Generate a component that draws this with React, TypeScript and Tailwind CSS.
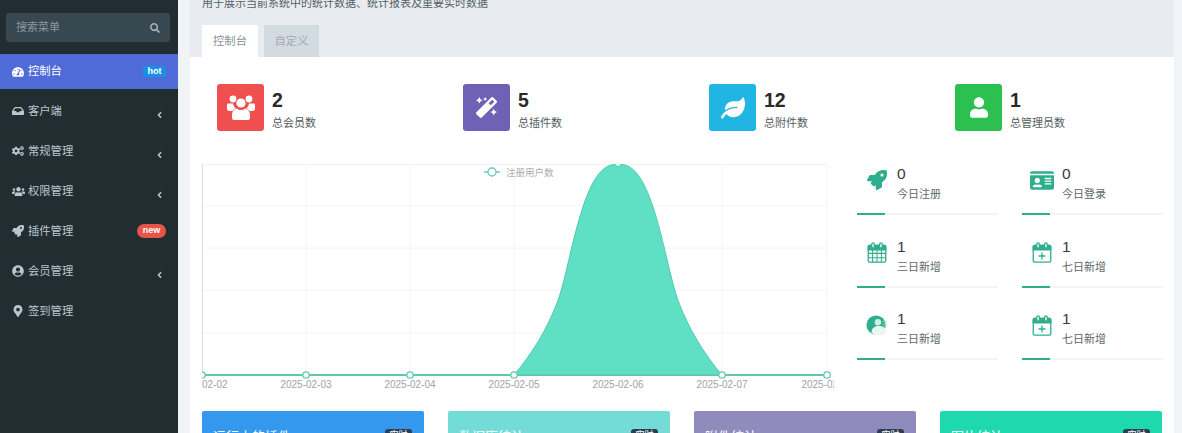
import React from "react";
import {
  FaAngleLeft,
  FaCogs,
  FaIdCard,
  FaInbox,
  FaLeaf,
  FaMagic,
  FaMapMarkerAlt,
  FaRocket,
  FaSearch,
  FaTachometerAlt,
  FaUser,
  FaUserCircle,
  FaUsers,
} from "react-icons/fa";

const fontStack = { fontFamily: '"Liberation Sans", "Noto Sans CJK SC", sans-serif' };

function GroupIcon() {
  return (
    <svg viewBox="0 0 30 30" className="h-[30px] w-[30px] fill-white">
      <circle cx="7" cy="6" r="3.4" />
      <circle cx="23" cy="6" r="3.4" />
      <circle cx="15" cy="10" r="4.6" />
      <path d="M2 10.5h5a7 7 0 0 0 2.6 5A7 7 0 0 0 6.5 18H3.5A2.5 2.5 0 0 1 1 15.5V12a1.5 1.5 0 0 1 1-1.5z" />
      <path d="M28 10.5h-5a7 7 0 0 1-2.6 5 7 7 0 0 1 3.1 2.5h3a2.500 2.500 0 0 0 2.500-2.500V12a1.500 1.500 0 0 0-1-1.500z" />
      <path d="M8 27a2 2 0 0 1-2-2v-3c0-4 3-6.500 5-6.500 1 1 2.500 1.500 4 1.500s3-.5 4-1.500c2 0 5 2.500 5 6.500v3a2 2 0 0 1-2 2z" />
    </svg>
  );
}

function CalendarIcon({ grid }: { grid?: boolean }) {
  return (
    <svg viewBox="0 0 22 24" className="h-[21px] w-[20px]" fill="none" stroke="#2fae8e" strokeWidth="1.500">
      <rect x="1" y="4" width="20" height="19" rx="1.500" />
      <path d="M1 9V5.500A1.500 1.500 0 0 1 2.500 4h17A1.500 1.500 0 0 1 21 5.500V9z" fill="#2fae8e" />
      <rect x="5" y="1" width="3" height="6" rx="1.500" fill="#fff" />
      <rect x="14" y="1" width="3" height="6" rx="1.500" fill="#fff" />
      {grid ? (
        <path d="M1 13h20M1 18h20M6 9v14M11 9v14M16 9v14" strokeWidth="1.200" />
      ) : (
        <path d="M11 12v8M7 16h8" />
      )}
    </svg>
  );
}

function PersonDiscIcon() {
  return (
    <svg viewBox="0 0 24 24" className="h-[22px] w-[22px]">
      <circle cx="11" cy="12" r="10.500" fill="#2fae8e" />
      <circle cx="13" cy="9" r="3.500" fill="#cfeee5" />
      <path d="M6 20c0-5 4-7 8-7s8 2 8 6l-3 4H9z" fill="#e9f7f3" />
      <path d="M18 8h5M18 11h5M18 14h5" stroke="#a9dccd" strokeWidth="1" />
    </svg>
  );
}

const menu = [
  { label: "控制台", icon: <FaTachometerAlt />, active: true, badge: "hot" },
  { label: "客户端", icon: <FaInbox />, arrow: true },
  { label: "常规管理", icon: <FaCogs />, arrow: true },
  { label: "权限管理", icon: <FaUsers className="h-[13px] w-[13px]" />, arrow: true },
  { label: "插件管理", icon: <FaRocket />, badge: "new" },
  { label: "会员管理", icon: <FaUserCircle />, arrow: true },
  { label: "签到管理", icon: <FaMapMarkerAlt /> },
];

function Sidebar() {
  return (
    <aside className="h-[433px] w-[178px] shrink-0 bg-[#222d32] pt-[13px]">
      <div className="ml-[6px] flex h-[29px] w-[164px] items-center justify-between rounded-[3px] bg-[#374850] pl-[10px] pr-[10px] text-[11px] text-[#8a979d]">
        <span>搜索菜单</span>
        <FaSearch className="h-[10px] w-[10px] text-[#aab4b9]" />
      </div>
      <ul className="mt-[12px]">
        {menu.map((item) => (
          <li
            key={item.label}
            className={
              item.active
                ? "mb-[2px] flex h-[35px] items-center bg-[#4e6bd8] pl-[12px] pr-[12px] text-[#ffffff]"
                : "flex h-[40px] items-center pl-[12px] pr-[12px] text-[#b8c7ce]"
            }
          >
            <span className="flex w-[16px] shrink-0 text-[12px]">{item.icon}</span>
            <span className="text-[11.300px]">{item.label}</span>
            {item.badge === "hot" && (
              <span className="ml-auto flex h-[11px] w-[23px] items-center justify-center rounded-[2px] bg-[#1a8fe8] text-[9px] font-bold text-white">
                hot
              </span>
            )}
            {item.badge === "new" && (
              <span className="ml-auto flex h-[14px] w-[29px] items-center justify-center rounded-full bg-[#e8534a] text-[9px] font-bold text-white">
                new
              </span>
            )}
            {item.arrow && <FaAngleLeft className="ml-auto mr-[3px] mt-[8px] h-[10px] w-[7px]" />}
          </li>
        ))}
      </ul>
    </aside>
  );
}

const topStats = [
  { value: "2", label: "总会员数", bg: "bg-[#ef4f4f]", icon: <GroupIcon /> },
  { value: "5", label: "总插件数", bg: "bg-[#6f61b5]", icon: <FaMagic className="h-[21px] w-[21px] text-white" /> },
  { value: "12", label: "总附件数", bg: "bg-[#21b5e4]", icon: <FaLeaf className="h-[22px] w-[24px] text-white" /> },
  { value: "1", label: "总管理员数", bg: "bg-[#2bc04f]", icon: <FaUser className="h-[21px] w-[18px] text-white" /> },
];

const sideStats = [
  { value: "0", label: "今日注册", icon: <FaRocket className="h-[20px] w-[20px] text-[#2fae8e]" /> },
  { value: "0", label: "今日登录", icon: <FaIdCard className="h-[23px] w-[24px] text-[#2fae8e]" /> },
  { value: "1", label: "三日新增", icon: <CalendarIcon grid /> },
  { value: "1", label: "七日新增", icon: <CalendarIcon /> },
  { value: "1", label: "三日新增", icon: <PersonDiscIcon /> },
  { value: "1", label: "七日新增", icon: <CalendarIcon /> },
];

const bottomCards = [
  { title: "运行中的插件", bg: "bg-[#3498ee]" },
  { title: "数据库统计", bg: "bg-[#74dcd7]" },
  { title: "附件统计", bg: "bg-[#8f8bbd]" },
  { title: "图片统计", bg: "bg-[#1ed9ae]" },
];

function Chart() {
  const points = [0, 104, 208, 312, 416, 520, 625];
  const dates = ["2025-02-02", "2025-02-03", "2025-02-04", "2025-02-05", "2025-02-06", "2025-02-07", "2025-02-08"];
  return (
    <svg width="632" height="232" viewBox="0 0 632 232" className="shrink-0">
      {points.slice(1).map((x) => (
        <line key={x} x1={x} y1="0" x2={x} y2="211" stroke="#f3f4f4" />
      ))}
      {[0.5, 42, 84, 126, 169].map((y) => (
        <line key={y} x1="0" y1={y} x2="625" y2={y} stroke="#f3f4f4" />
      ))}
      <line x1="0.500" y1="0" x2="0.500" y2="211" stroke="#dcdfe0" />
      <path
        d="M312 211C330 190 345 165 355 139C369 103 380 0.500 413 0.500L416 3L419 0.500C452 0.500 463 103 477 139C487 165 502 190 520 211Z"
        fill="#5fe0c5"
        stroke="#4fcbb0"
      />
      <line x1="0" y1="211" x2="625" y2="211" stroke="#5fc9ae" strokeWidth="2" />
      {points.filter((x) => x !== 416).map((x) => (
        <circle key={x} cx={x} cy="211" r="3.200" fill="#fff" stroke="#62c9b1" strokeWidth="1.300" />
      ))}
      {dates.map((d, i) => (
        <text key={d} x={points[i]} y="224" textAnchor="middle" fontSize="10" fill="#a3a3a3">
          {d}
        </text>
      ))}
      <line x1="282" y1="8" x2="298" y2="8" stroke="#62c9b1" strokeWidth="1.300" />
      <circle cx="290" cy="8" r="4" fill="#fff" stroke="#62c9b1" strokeWidth="1.300" />
      <text x="304" y="11.500" fontSize="9.500" fill="#adadad">
        注册用户数
      </text>
    </svg>
  );
}

export default function App() {
  return (
    <div className="flex h-[433px] w-[1182px] overflow-hidden bg-[#f1f4f6]" style={fontStack}>
      <Sidebar />
      <main className="-mt-[4px] ml-[12px] w-[984px] shrink-0">
        <div className="h-[61px] bg-[#e8ecf0] pl-[12px]">
          <p className="text-[11px] leading-[14px] text-[#555f66]">
            用于展示当前系统中的统计数据、统计报表及重要实时数据
          </p>
          <div className="mt-[15px] flex gap-[6px] text-[11.300px]">
            <div className="flex h-[32px] w-[56px] items-center justify-center bg-white text-[#8a9299]">控制台</div>
            <div className="flex h-[32px] w-[55px] items-center justify-center bg-[#d3dae0] text-[#a3acb3]">自定义</div>
          </div>
        </div>

        <div className="h-[376px] overflow-hidden bg-white">
          <div className="grid grid-cols-4 pt-[27px]">
            {topStats.map((s) => (
              <div key={s.label} className="flex items-start pl-[27px]">
                <div className={`flex h-[47px] w-[47px] items-center justify-center rounded-[3px] ${s.bg}`}>{s.icon}</div>
                <div className="ml-[8px] mt-[5px]">
                  <div className="text-[19.500px] font-bold leading-[22px] text-[#2a2a2a]">{s.value}</div>
                  <div className="mt-[4px] text-[11px] leading-[16px] text-[#555c60]">{s.label}</div>
                </div>
              </div>
            ))}
          </div>

          <div className="mt-[33px] flex pl-[12px]">
            <Chart />
            <div className="ml-[23px] grid h-[232px] w-[306px] grid-cols-2 content-start gap-x-[24px]">
              {sideStats.map((s, i) => (
                <div key={i} className="h-[72.500px]">
                  <div className="flex h-[49px] items-start">
                    <div className="flex h-[32px] w-[40px] shrink-0 items-center justify-center pr-[1px]">{s.icon}</div>
                    <div>
                      <div className="text-[15.500px] leading-[20px] text-[#333b3f]">{s.value}</div>
                      <div className="mt-[2px] text-[11px] leading-[16px] text-[#60676b]">{s.label}</div>
                    </div>
                  </div>
                  <div className="h-[2px] bg-[#f3f4f4]">
                    <div className="h-[2px] w-[28px] bg-[#2fae8e]" />
                  </div>
                </div>
              ))}
            </div>
          </div>

          <div className="mt-[15px] grid grid-cols-4 gap-x-[24px] pl-[12px] pr-[12px]">
            {bottomCards.map((c) => (
              <div key={c.title} className={`flex h-[100px] justify-between rounded-t-[2px] pl-[11px] pr-[12px] pt-[17px] ${c.bg}`}>
                <span className="text-[13px] leading-[18px] text-white">{c.title}</span>
                <span className="mt-[1px] flex h-[14px] w-[27px] items-center justify-center rounded-[3px] bg-[#2c3e50] text-[9px] text-white">
                  实时
                </span>
              </div>
            ))}
          </div>
        </div>
      </main>
    </div>
  );
}
